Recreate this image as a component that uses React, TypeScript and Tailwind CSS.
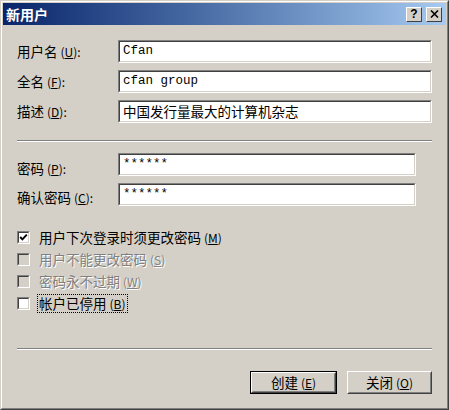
import React from "react";

const cjk = "font-['Noto_Sans_CJK_SC','Noto_Sans',sans-serif]";
const mono = "font-['Liberation_Mono','Noto_Sans_CJK_SC',monospace]";

// sunken 2px edit frame
const Sunken: React.FC<{ className?: string; children?: React.ReactNode }> = ({
  className = "",
  children,
}) => (
  <div
    className={`border border-t-[#808080] border-l-[#808080] border-b-white border-r-white ${className}`}>
    <div className="h-full w-full border border-t-[#404040] border-l-[#404040] border-b-[#d4d0c8] border-r-[#d4d0c8] bg-white flex items-center pl-[3px] overflow-hidden">
      {children}
    </div>
  </div>
);

const Etched = () => (
  <div className="w-full">
    <div className="h-px bg-[#808080]" />
    <div className="h-px bg-white" />
  </div>
);

interface FieldProps {
  label: string;
  accel: string;
  value: string;
  width?: string;
  valueClass?: string;
  labelPad?: string;
}

const Field: React.FC<FieldProps> = ({
  label,
  accel,
  value,
  width = "flex-1",
  valueClass = mono + " text-[12.5px]",
  labelPad = "",
}) => (
  <div className="flex items-center h-[23px]">
    <div className={`w-[101px] text-[13.5px] leading-none text-black ${labelPad}`}>
      {label}
      <span className="text-[12px] ml-[3px]">
        (<u>{accel}</u>):
      </span>
    </div>
    <Sunken className={`h-[23px] ${width}`}>
      <span className={`${valueClass} text-black whitespace-nowrap leading-none`}>
        {value}
      </span>
    </Sunken>
  </div>
);

interface CheckProps {
  label: string;
  accel: string;
  checked?: boolean;
  disabled?: boolean;
  focused?: boolean;
}

const Check: React.FC<CheckProps> = ({ label, accel, checked, disabled, focused }) => (
  <div className="flex items-center h-[22px]">
    <div className="w-[13px] h-[13px] border border-t-[#808080] border-l-[#808080] border-b-white border-r-white">
      <div
        className={`w-full h-full border border-t-[#404040] border-l-[#404040] border-b-[#d4d0c8] border-r-[#d4d0c8] ${
          disabled ? "bg-[#d4d0c8]" : "bg-white"
        } flex items-center justify-center`}>
        {checked && (
          <svg width="9" height="9" viewBox="0 0 9 9">
            <polyline
              points="1.2,4 3.4,6.3 7.8,1.6"
              fill="none"
              stroke="#000"
              strokeWidth="1.9"
            />
          </svg>
        )}
      </div>
    </div>
    <div
      className={`ml-[8px] px-px text-[13.5px] leading-[16px] ${
        disabled ? "text-[#808080] [text-shadow:1px_1px_0_#fff]" : "text-black"
      } ${focused ? "outline outline-1 outline-dotted outline-black" : ""}`}>
      {label}
      <span className="text-[12px] ml-[3px]">
        (<u>{accel}</u>)
      </span>
    </div>
  </div>
);

const Button: React.FC<{ label: string; accel: string; isDefault?: boolean; width: string }> = ({
  label,
  accel,
  isDefault,
  width,
}) => (
  <div className={`${width} h-[23px] ${isDefault ? "border border-black" : ""}`}>
    <div className="w-full h-full border border-t-white border-l-white border-b-[#404040] border-r-[#404040]">
      <div className="w-full h-full border border-t-[#d4d0c8] border-l-[#d4d0c8] border-b-[#808080] border-r-[#808080] flex items-center justify-center text-[13.5px] leading-none text-black">
        {label}
        <span className="text-[12px] ml-[3px]">
          (<u>{accel}</u>)
        </span>
      </div>
    </div>
  </div>
);

const TitleButton: React.FC<{ children: React.ReactNode }> = ({ children }) => (
  <div className="w-[16px] h-[15px] bg-[#d4d0c8] border border-t-white border-l-white border-b-[#404040] border-r-[#404040] flex items-center justify-center">
    {children}
  </div>
);

export default function App() {
  return (
    <div className={`w-[449px] h-[410px] ${cjk} select-none`}>
      <div className="w-full h-full border border-t-[#d4d0c8] border-l-[#d4d0c8] border-b-[#404040] border-r-[#404040]">
        <div className="w-full h-full border border-t-white border-l-white border-b-[#808080] border-r-[#808080] bg-[#d4d0c8] p-px flex flex-col">
          {/* caption */}
          <div className="h-[22px] flex items-center bg-gradient-to-r from-[#0a246a] to-[#a6caf0] pl-[3px] pr-[4px]">
            <span className="text-white font-bold text-[14px] leading-none">新用户</span>
            <div className="ml-auto flex gap-[4px]">
              <TitleButton>
                <span className="font-['Liberation_Sans',sans-serif] font-bold text-[12px] leading-none text-black">
                  ?
                </span>
              </TitleButton>
              <TitleButton>
                <svg width="9" height="8" viewBox="0 0 9 8">
                  <path d="M1 0.5 L8 7.5 M8 0.5 L1 7.5" stroke="#000" strokeWidth="1.6" />
                </svg>
              </TitleButton>
            </div>
          </div>

          <div className="flex-1 flex flex-col px-[14px]">
            <div className="flex flex-col gap-[7px] mt-[15px]">
              <Field label="用户名" accel="U" value="Cfan" />
              <Field label="全名" accel="F" value="cfan group" />
              <Field
                label="描述"
                accel="D"
                value="中国发行量最大的计算机杂志"
                valueClass={cjk + " text-[13.5px]"}
              />
            </div>

            <div className="mt-[17px]">
              <Etched />
            </div>

            <div className="flex flex-col gap-[7px] mt-[11px]">
              <Field label="密码" accel="P" value="******" width="w-[298px]" labelPad="pt-[8px]" />
              <Field label="确认密码" accel="C" value="******" width="w-[298px]" labelPad="pt-[6px]" />
            </div>

            <div className="flex flex-col mt-[20px]">
              <Check label="用户下次登录时须更改密码" accel="M" checked />
              <Check label="用户不能更改密码" accel="S" disabled />
              <Check label="密码永不过期" accel="W" disabled />
              <Check label="帐户已停用" accel="B" focused />
            </div>

            <div className="mt-[34px]">
              <Etched />
            </div>

            <div className="flex justify-end gap-[10px] mt-[21px]">
              <Button label="创建" accel="E" isDefault width="w-[87px]" />
              <Button label="关闭" accel="O" width="w-[85px]" />
            </div>
          </div>
        </div>
      </div>
    </div>
  );
}
